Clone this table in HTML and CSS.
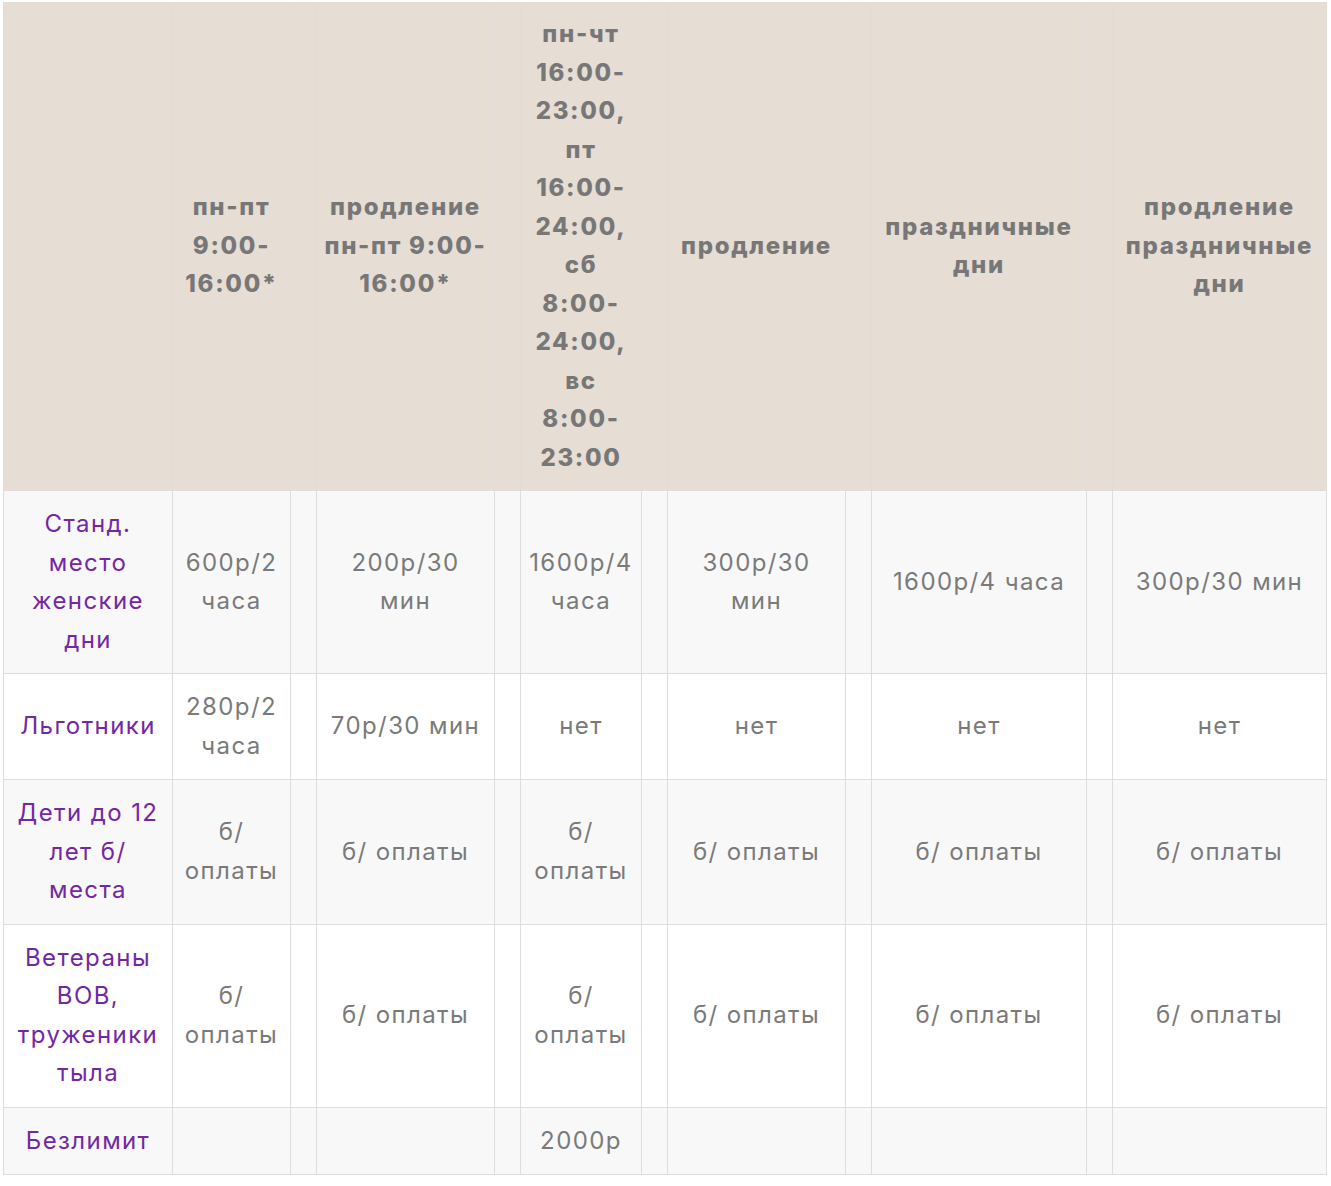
FILE: index.html
```html
<!DOCTYPE html>
<html lang="ru">
<head>
<meta charset="utf-8">
<title>Цены</title>
<link rel="stylesheet" href="styles.css">
</head>
<body>
<table class="prices">
  <colgroup>
    <col class="c-name">
    <col class="c-a">
    <col class="c-gap">
    <col class="c-b">
    <col class="c-gap">
    <col class="c-c">
    <col class="c-gap">
    <col class="c-b">
    <col class="c-gap">
    <col class="c-d">
    <col class="c-gap">
    <col class="c-e">
  </colgroup>
  <thead>
    <tr>
      <th></th>
      <th>пн-пт<br>9:00-<br>16:00*</th>
      <th></th>
      <th>продление<br>пн-пт 9:00-<br>16:00*</th>
      <th></th>
      <th>пн-чт<br>16:00-<br>23:00,<br>пт<br>16:00-<br>24:00,<br>сб<br>8:00-<br>24:00,<br>вс<br>8:00-<br>23:00</th>
      <th></th>
      <th>продление</th>
      <th></th>
      <th>праздничные<br>дни</th>
      <th></th>
      <th>продление<br>праздничные<br>дни</th>
    </tr>
  </thead>
  <tbody>
    <tr class="odd">
      <td class="name">Станд.<br>место<br>женские<br>дни</td>
      <td>600р/2<br>часа</td>
      <td></td>
      <td>200р/30<br>мин</td>
      <td></td>
      <td>1600р/4<br>часа</td>
      <td></td>
      <td>300р/30<br>мин</td>
      <td></td>
      <td>1600р/4 часа</td>
      <td></td>
      <td>300р/30 мин</td>
    </tr>
    <tr>
      <td class="name">Льготники</td>
      <td>280р/2<br>часа</td>
      <td></td>
      <td>70р/30 мин</td>
      <td></td>
      <td>нет</td>
      <td></td>
      <td>нет</td>
      <td></td>
      <td>нет</td>
      <td></td>
      <td>нет</td>
    </tr>
    <tr class="odd">
      <td class="name">Дети до 12<br>лет б/<br>места</td>
      <td>б/<br>оплаты</td>
      <td></td>
      <td>б/ оплаты</td>
      <td></td>
      <td>б/<br>оплаты</td>
      <td></td>
      <td>б/ оплаты</td>
      <td></td>
      <td>б/ оплаты</td>
      <td></td>
      <td>б/ оплаты</td>
    </tr>
    <tr>
      <td class="name">Ветераны<br>ВОВ,<br>труженики<br>тыла</td>
      <td>б/<br>оплаты</td>
      <td></td>
      <td>б/ оплаты</td>
      <td></td>
      <td>б/<br>оплаты</td>
      <td></td>
      <td>б/ оплаты</td>
      <td></td>
      <td>б/ оплаты</td>
      <td></td>
      <td>б/ оплаты</td>
    </tr>
    <tr class="odd">
      <td class="name">Безлимит</td>
      <td></td>
      <td></td>
      <td></td>
      <td></td>
      <td>2000р</td>
      <td></td>
      <td></td>
      <td></td>
      <td></td>
      <td></td>
      <td></td>
    </tr>
  </tbody>
</table>
</body>
</html>
```
FILE: styles.css
```css
html, body {
  margin: 0;
  padding: 0;
  background: #ffffff;
}

body {
  padding: 2px 3px 0 3px;
  font-family: Inter, "Noto Sans", "DejaVu Sans", sans-serif;
}

.prices {
  border-collapse: collapse;
  table-layout: fixed;
  width: 1324px;
  border: 1px solid #dddddd;
  color: #777777;
  font-size: 24px;
  line-height: 38.5px;
  text-align: center;
}

.c-name { width: 169px; }
.c-a { width: 118px; }
.c-gap { width: 26px; }
.c-b { width: 178px; }
.c-c { width: 121px; }
.c-d { width: 215px; }
.c-e { width: 214px; }

.prices th,
.prices td {
  border: 1px solid #dddddd;
  padding: 14px 0;
  vertical-align: middle;
  white-space: nowrap;
}

.prices thead th {
  background: #e6ddd4;
  border-color: #e2dcd8;
  font-weight: 800;
  color: #777777;
  letter-spacing: 1.7px;
  padding: 12px 0 13px;
}

.prices tbody tr {
  background: #ffffff;
}

.prices tbody tr.odd {
  background: #f8f8f8;
}

.prices td {
  font-weight: 400;
  letter-spacing: 1.4px;
  color: #7a7a7a;
}

.prices td.name {
  color: #7327a3;
}
```
